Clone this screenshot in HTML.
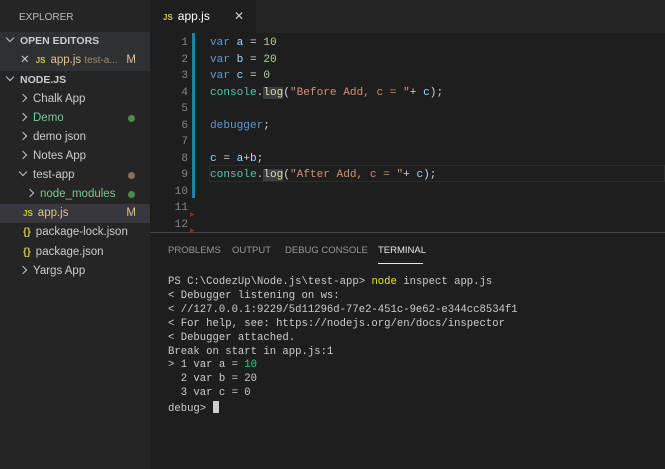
<!DOCTYPE html>
<html><head><style>
*{margin:0;padding:0;box-sizing:border-box}
body{width:665px;height:469px;background:#1e1e1e;overflow:hidden;font-family:"Liberation Sans",sans-serif;position:relative}
.sb{position:absolute;left:0;top:0;width:150px;height:469px;background:#252526;color:#ccc;font-size:11.5px}
.r{position:absolute;left:0;width:150px;height:19px;line-height:19px;white-space:nowrap}
.hd{font-weight:bold;font-size:10.5px;color:#ccc}
.ch{display:inline-block;width:6px;height:6px;border-left:1.3px solid #c5c5c5;border-bottom:1.3px solid #c5c5c5;margin-right:7px;vertical-align:1px}
.rt{transform:rotate(-135deg)}
.dn{transform:rotate(-45deg);vertical-align:3px}
.dot{position:absolute;right:15px;top:6px;width:7px;height:7px;border-radius:50%;background:#4b8b4b}
.js{color:#cbcb41;font-size:8px;font-weight:bold;margin-right:5px}
.br{color:#cbcb41;font-size:10px;font-weight:bold;margin-right:5px}
.M{position:absolute;right:14px;color:#e2c08d}
.ed{position:absolute;left:150px;top:0;width:515px;height:232px;overflow:hidden}
.tabs{position:absolute;left:0;top:0;width:515px;height:33px;background:#252526}
.tab{position:absolute;left:0;top:0;width:106px;height:33px;background:#1e1e1e;color:#fff;font-size:12px;line-height:33px;padding-left:13px}
.mono{font-family:"Liberation Mono",monospace}
.ln{position:absolute;left:0;width:38px;text-align:right;color:#858585;font-size:11.1px}
.cd{position:absolute;left:60px;color:#d4d4d4;font-size:11.1px;white-space:pre}
.k{color:#569cd6}.v{color:#9cdcfe}.n{color:#b5cea8}.s{color:#ce9178}.f{color:#dcdcaa}.c{color:#4ec9b0}
.lg{background:#3a3d41}
.pn{position:absolute;left:150px;top:232px;width:515px;height:237px;border-top:1px solid #444;background:#1e1e1e}
.pt{position:absolute;top:12px;font-size:9.5px;color:#969696}
.term{position:absolute;left:18px;top:43px;color:#ccc;font-size:10.6px;line-height:13.9px;white-space:pre}
</style></head><body>
<div class="sb">
<div class="r" style="top:8px;padding-left:19px;font-size:10px;color:#bbb">EXPLORER</div>
<div style="position:absolute;top:32px;left:0;width:150px;height:39px;background:#2f3031"></div>
<div class="r hd" style="top:32px;padding-left:7px"><span class="ch dn"></span>OPEN EDITORS</div>
<div class="r" style="top:51px;padding-left:20px"><span style="color:#c5c5c5;margin-right:6px">✕</span><span class="js">JS</span><span style="color:#e2c08d">app.js</span> <span style="color:#9c8a6a;font-size:10px">test-a...</span><span class="M">M</span></div>
<div class="r hd" style="top:71px;padding-left:7px"><span class="ch dn"></span>NODE.JS</div>
<div class="r" style="top:90px;padding-left:20px"><span class="ch rt"></span>Chalk App</div>
<div class="r" style="top:109px;padding-left:20px;color:#73c991"><span class="ch rt"></span>Demo<span class="dot"></span></div>
<div class="r" style="top:128px;padding-left:20px"><span class="ch rt"></span>demo json</div>
<div class="r" style="top:147px;padding-left:20px"><span class="ch rt"></span>Notes App</div>
<div class="r" style="top:166px;padding-left:20px"><span class="ch dn"></span>test-app<span class="dot" style="background:#8a6f5a"></span></div>
<div class="r" style="top:185px;padding-left:27px;color:#73c991"><span class="ch rt"></span>node_modules<span class="dot"></span></div>
<div class="r" style="top:204px;padding-left:23px;background:#37373d;color:#e2c08d"><span class="js">JS</span>app.js<span class="M">M</span></div>
<div class="r" style="top:223px;padding-left:23px"><span class="br">{}</span>package-lock.json</div>
<div class="r" style="top:243px;padding-left:23px"><span class="br">{}</span>package.json</div>
<div class="r" style="top:262px;padding-left:20px"><span class="ch rt"></span>Yargs App</div>
</div>
<div class="ed">
<div class="tabs"><div class="tab"><span class="js">JS</span>app.js<span style="position:absolute;left:84px;color:#ccc">✕</span></div></div>
<div style="position:absolute;left:42px;top:33px;width:3px;height:165px;background:#1a85a8"></div>
<div style="position:absolute;left:59px;top:165px;width:456px;height:17px;border:1px solid #2c2c2c"></div>
<div class="mono">
<div class="ln" style="top:35px;line-height:16.5px">1<br>2<br>3<br>4<br>5<br>6<br>7<br>8<br>9<br>10<br>11<br>12</div>
<div class="cd" style="top:35px;line-height:16.5px"><span class="k">var</span> <span class="v">a</span> = <span class="n">10</span>
<span class="k">var</span> <span class="v">b</span> = <span class="n">20</span>
<span class="k">var</span> <span class="v">c</span> = <span class="n">0</span>
<span class="c">console</span>.<span class="f lg">log</span>(<span class="s">"Before Add, c = "</span>+ <span class="v">c</span>);

<span class="k">debugger</span>;

<span class="v">c</span> = <span class="v">a</span>+<span class="v">b</span>;
<span class="c">console</span>.<span class="f lg">log</span>(<span class="s">"After Add, c = "</span>+ <span class="v">c</span>);</div>
</div>
<div style="position:absolute;left:40px;top:211px;color:#a1260d;font-size:6px">▶</div>
<div style="position:absolute;left:40px;top:227px;color:#a1260d;font-size:6px">▶</div>
</div>
<div class="pn">
<div class="pt" style="left:18px">PROBLEMS</div>
<div class="pt" style="left:82px">OUTPUT</div>
<div class="pt" style="left:135px">DEBUG CONSOLE</div>
<div class="pt" style="left:228px;color:#e7e7e7">TERMINAL</div>
<div style="position:absolute;left:228px;top:30px;width:45px;height:1px;background:#e7e7e7"></div>
<div class="term mono">PS C:\CodezUp\Node.js\test-app> <span style="color:#e5e510">node</span> inspect app.js
&lt; Debugger listening on ws:
&lt; //127.0.0.1:9229/5d11296d-77e2-451c-9e62-e344cc8534f1
&lt; For help, see: https://nodejs.org/en/docs/inspector
&lt; Debugger attached.
Break on start in app.js:1
&gt; 1 var a = <span style="color:#23d18b">10</span>
  2 var b = 20
  3 var c = 0
debug&gt; <span style="display:inline-block;width:6px;height:12px;background:#ccc;vertical-align:-2px"></span></div>
</div>
</body></html>
